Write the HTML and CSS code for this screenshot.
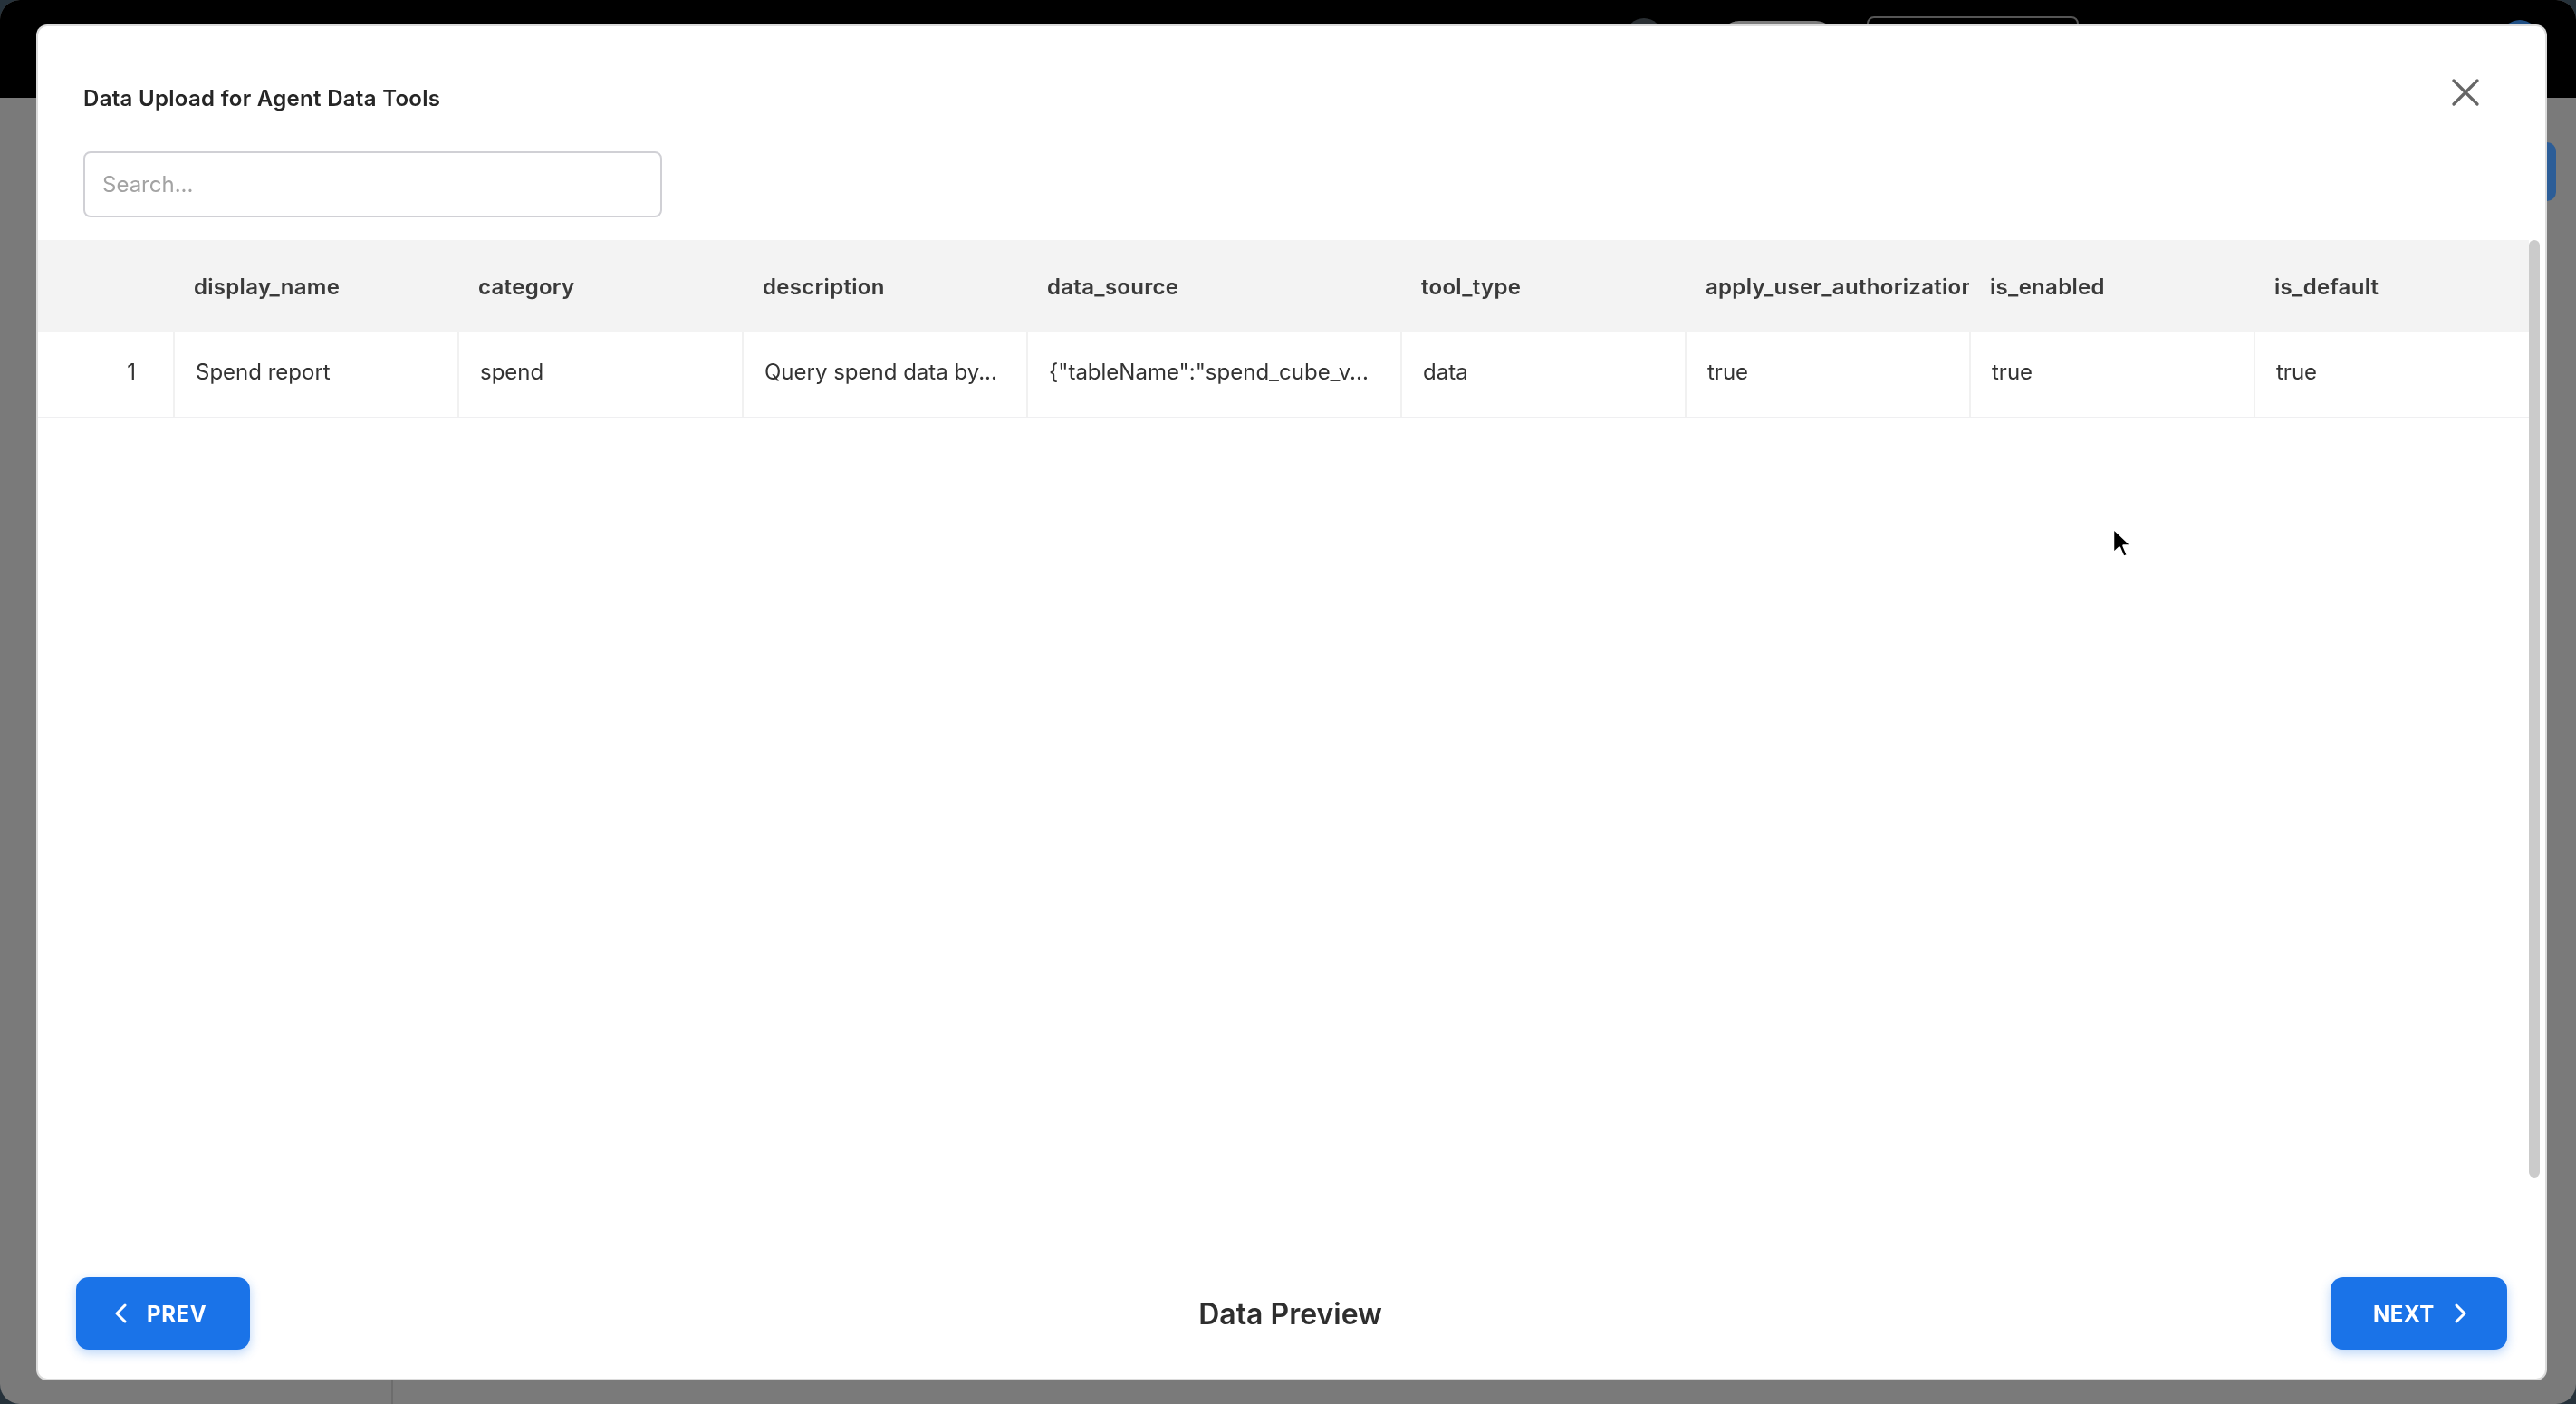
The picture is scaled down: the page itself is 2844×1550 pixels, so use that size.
FILE: index.html
```html
<!DOCTYPE html>
<html lang="en">
<head>
    <meta charset="UTF-8">
    <meta name="viewport" content="width=device-width, initial-scale=1.0">
    <title>Data Upload for Agent Data Tools</title>
    <link rel="stylesheet" href="styles.css">
</head>
<body>
    <div class="window">
        <header class="topbar">
            <span class="dot dark"></span>
            <span class="pill"></span>
            <span class="outline-box"></span>
            <span class="dot blue"></span>
        </header>
        <div class="page">
            <aside class="sidebar"></aside>
            <main class="page-main"><span class="page-btn"></span></main>
        </div>
    </div>

    <div class="modal" role="dialog">
        <div class="modal-head">
            <h1 class="modal-title">Data Upload for Agent Data Tools</h1>
            <button class="close-btn" aria-label="Close">
                <svg width="30" height="30" viewBox="0 0 30 30"><path d="M2 2 L28 28 M28 2 L2 28" stroke="#666" stroke-width="3.2" stroke-linecap="round" fill="none"/></svg>
            </button>
        </div>

        <input class="search" type="text" placeholder="Search...">

        <div class="grid-wrap">
            <div class="grid">
                <div class="grid-row head">
                    <div class="cell"></div>
                    <div class="cell">display_name</div>
                    <div class="cell">category</div>
                    <div class="cell">description</div>
                    <div class="cell">data_source</div>
                    <div class="cell">tool_type</div>
                    <div class="cell">apply_user_authorization</div>
                    <div class="cell">is_enabled</div>
                    <div class="cell">is_default</div>
                </div>
                <div class="grid-row body">
                    <div class="cell num">1</div>
                    <div class="cell">Spend report</div>
                    <div class="cell">spend</div>
                    <div class="cell">Query spend data by...</div>
                    <div class="cell">{"tableName":"spend_cube_v...</div>
                    <div class="cell">data</div>
                    <div class="cell">true</div>
                    <div class="cell">true</div>
                    <div class="cell">true</div>
                </div>
            </div>
            <div class="scrollbar"></div>
        </div>

        <div class="modal-foot">
            <button class="nav-btn prev">
                <svg width="14" height="22" viewBox="0 0 14 22"><path d="M12 2 L3 11 L12 20" stroke="#fff" stroke-width="3" fill="none" stroke-linecap="round" stroke-linejoin="round"/></svg>
                PREV
            </button>
            <div class="step-label">Data Preview</div>
            <button class="nav-btn next">
                NEXT
                <svg width="14" height="22" viewBox="0 0 14 22"><path d="M2 2 L11 11 L2 20" stroke="#fff" stroke-width="3" fill="none" stroke-linecap="round" stroke-linejoin="round"/></svg>
            </button>
        </div>
    </div>

    <svg class="cursor" width="26" height="38" viewBox="0 0 26 38">
        <path d="M2 2 L2 30 L9 23.5 L13.5 34 L18 32 L13.5 21.5 L22.5 21.5 Z" fill="#000" stroke="#fff" stroke-width="2.5" stroke-linejoin="round"/>
    </svg>
</body>
</html>
```

FILE: styles.css
```css
* {
    box-sizing: border-box;
}
html, body {
    margin: 0;
    height: 100%;
}
body {
    font-family: Inter, "Noto Sans", sans-serif;
    background: #26323b;
    overflow: hidden;
    color: #333;
}

/* page behind the dialog (dimmed) */
.window {
    height: 100%;
    border-radius: 22px;
    overflow: hidden;
    display: flex;
    flex-direction: column;
    background: #7a7a7a;
}
.topbar {
    height: 108px;
    background: #000;
    display: flex;
    align-items: flex-start;
    padding-left: 1795px;
}
.dot {
    width: 40px;
    height: 40px;
    border-radius: 50%;
    margin-top: 20px;
}
.dot.dark {
    background: #2a2f33;
}
.dot.blue {
    background: #1f4f85;
    margin-left: 467px;
    margin-top: 22px;
}
.pill {
    width: 125px;
    height: 40px;
    margin: 23px 0 0 65px;
    border-radius: 20px;
    background: #7d7d7d;
}
.outline-box {
    width: 234px;
    height: 50px;
    margin: 18px 0 0 36px;
    border: 2px solid #555;
    border-radius: 8px;
}
.page {
    flex: 1;
    display: flex;
}
.sidebar {
    width: 434px;
    border-right: 2px solid #6c6c6c;
}
.page-main {
    flex: 1;
    display: flex;
    justify-content: flex-end;
    align-items: flex-start;
    padding: 49px 22px 0 0;
}
.page-btn {
    width: 70px;
    height: 65px;
    border-radius: 10px;
    background: #2c5d97;
}

/* dialog */
.modal {
    position: fixed;
    left: 42px;
    top: 29px;
    width: 2768px;
    height: 1493px;
    background: #fff;
    border-radius: 10px;
    box-shadow: 0 0 0 2px #dcdcdc;
    display: flex;
    flex-direction: column;
}
.modal-head {
    display: flex;
    justify-content: space-between;
    align-items: flex-start;
    padding: 58px 73px 0 50px;
}
.modal-title {
    margin: 6px 0 0;
    font-size: 24px;
    line-height: 32px;
    font-weight: 600;
    letter-spacing: 0.3px;
    color: #262626;
}
.close-btn {
    border: none;
    background: none;
    padding: 0;
    width: 30px;
    height: 30px;
    cursor: pointer;
}
.search {
    margin: 42px 0 0 50px;
    width: 639px;
    height: 73px;
    border: 2px solid #d0d0d5;
    border-radius: 8px;
    padding: 0 19px;
    font-family: inherit;
    font-size: 24px;
    color: #333;
    outline: none;
}
.search::placeholder {
    color: #a3a3a3;
}

/* data grid */
.grid-wrap {
    margin-top: 25px;
    height: 1035px;
    display: flex;
}
.grid {
    width: 2750px;
}
.grid-row {
    display: grid;
    grid-template-columns: 149px 314px 314px 314px 413px 314px 314px 314px 1fr;
}
.cell {
    display: flex;
    align-items: center;
    white-space: nowrap;
    overflow: hidden;
    font-size: 24px;
}
.grid-row.head {
    height: 102px;
    background: #f3f3f3;
}
.grid-row.head .cell {
    padding-left: 23px;
    font-weight: 600;
    letter-spacing: 0.3px;
    color: #3a3a3a;
}
.grid-row.body {
    height: 95px;
    border-bottom: 2px solid #efeff1;
}
.grid-row.body .cell {
    padding: 0 20px 6px 23px;
    border-left: 2px solid #f1f1f1;
    color: #333;
    text-overflow: ellipsis;
}
.grid-row.body .cell.num {
    border-left: none;
    justify-content: flex-end;
    padding-right: 41px;
}
.scrollbar {
    width: 12px;
    height: 100%;
    border-radius: 6px;
    background: #cbcbcb;
}

/* footer */
.modal-foot {
    margin-top: auto;
    display: flex;
    align-items: center;
    justify-content: space-between;
    padding: 0 42px 32px;
}
.nav-btn {
    height: 80px;
    display: inline-flex;
    align-items: center;
    gap: 22px;
    border: none;
    border-radius: 14px;
    background: #1a73e8;
    color: #fff;
    font-family: inherit;
    font-size: 24px;
    font-weight: 700;
    letter-spacing: 0.6px;
    box-shadow: 0 4px 12px rgba(26, 115, 232, 0.3);
    cursor: pointer;
}
.nav-btn.prev {
    padding: 0 48px 0 42px;
}
.nav-btn.next {
    padding: 0 44px 0 47px;
}
.step-label {
    font-size: 32px;
    font-weight: 600;
    color: #2e2e2e;
}

.cursor {
    position: fixed;
    left: 2331px;
    top: 581px;
}
```
